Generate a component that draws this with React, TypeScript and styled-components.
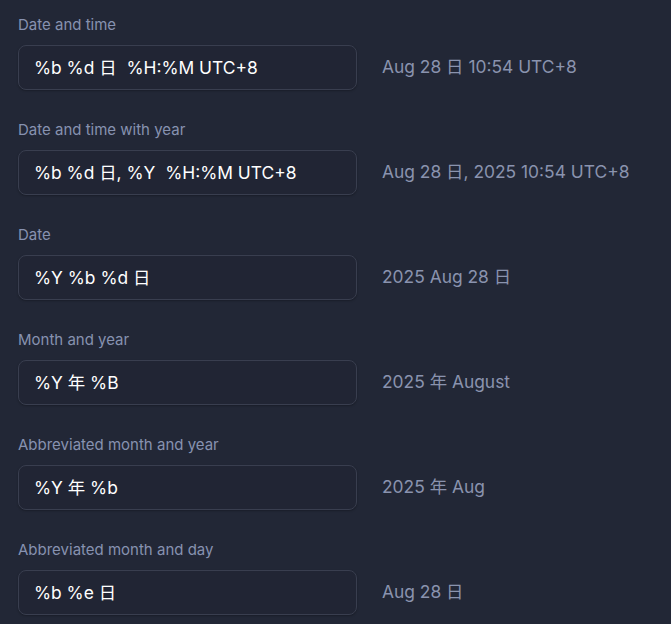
import React from "react";
import styled, { createGlobalStyle } from "styled-components";

const Global = createGlobalStyle`
  html, body { margin: 0; padding: 0; background: #222736; }
  body { font-family: Inter, "Noto Sans CJK SC", sans-serif; }
`;

const Page = styled.div`
  padding: 15px 18px 0 18px;
  display: flex;
  flex-direction: column;
`;

const Section = styled.div`
  display: flex;
  flex-direction: column;
  margin-bottom: 30px;
`;

const Label = styled.div`
  font-size: 15px;
  line-height: 20px;
  color: #8792b0;
  margin-bottom: 10px;
`;

const Row = styled.div`
  display: flex;
  align-items: center;
  gap: 25px;
`;

const Input = styled.div`
  box-sizing: border-box;
  width: 339px;
  height: 45px;
  border: 1px solid #393e4f;
  border-radius: 8px;
  background: #212534;
  padding: 0 15px;
  display: flex;
  align-items: center;
  font-size: 17.4px;
  line-height: 22px;
  font-weight: 400;
  color: #ffffff;
  white-space: pre;
  box-shadow: 0 1px 2px rgba(0, 0, 0, 0.25);
`;

const Preview = styled.div`
  font-size: 17.4px;
  line-height: 22px;
  color: #8a93ae;
  white-space: pre;
  margin-top: -2px;
`;

const items = [
  { label: "Date and time", value: "%b %d 日  %H:%M UTC+8", preview: "Aug 28 日 10:54 UTC+8" },
  { label: "Date and time with year", value: "%b %d 日, %Y  %H:%M UTC+8", preview: "Aug 28 日, 2025 10:54 UTC+8" },
  { label: "Date", value: "%Y %b %d 日", preview: "2025 Aug 28 日" },
  { label: "Month and year", value: "%Y 年 %B", preview: "2025 年 August" },
  { label: "Abbreviated month and year", value: "%Y 年 %b", preview: "2025 年 Aug" },
  { label: "Abbreviated month and day", value: "%b %e 日", preview: "Aug 28 日" },
];

export default function App() {
  return (
    <>
      <Global />
      <Page>
        {items.map((it) => (
          <Section key={it.label}>
            <Label>{it.label}</Label>
            <Row>
              <Input>{it.value}</Input>
              <Preview>{it.preview}</Preview>
            </Row>
          </Section>
        ))}
      </Page>
    </>
  );
}
